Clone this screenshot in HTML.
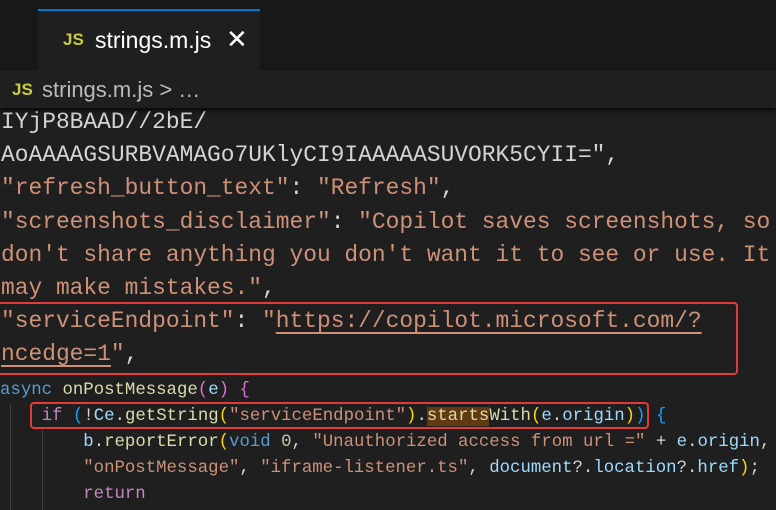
<!DOCTYPE html>
<html><head><meta charset="utf-8"><style>
body{margin:0;width:776px;height:510px;background:#1f1f1f;overflow:hidden;position:relative;font-family:"Liberation Mono",monospace}
.top{position:absolute;left:0;top:0;width:776px;height:70px;background:#181818}
.tab{position:absolute;left:38px;top:9px;width:222px;height:61px;background:#1f1f1f;border-top:2px solid #0078d4;box-sizing:border-box}
.tab .js{position:absolute;left:25px;top:19px;color:#cbcb41;font:bold 17px "Liberation Sans",sans-serif}
.tab .n{position:absolute;left:57px;top:16px;color:#fff;font:23px "Liberation Sans",sans-serif}
.tab .x{position:absolute;left:188px;top:13px;color:#fff;font:26px "Liberation Sans",sans-serif}
.bc{position:absolute;left:0;top:70px;width:776px;height:38px;background:#1f1f1f;box-shadow:0 3px 4px #000a;z-index:2}
.bc .js{position:absolute;left:12px;top:10px;color:#cbcb41;font:bold 17px "Liberation Sans",sans-serif}
.bc .n{position:absolute;left:42px;top:7px;color:#bbb;font:22px "Liberation Sans",sans-serif}
.big{position:absolute;left:1px;top:106px;font-size:22.9px;line-height:33.2px;color:#ce9178;white-space:pre}
.sm{position:absolute;left:0;top:378px;font-size:17.35px;line-height:26px;color:#d4d4d4;white-space:pre}
.w{color:#d4d4d4}.u{text-decoration:underline;text-underline-offset:5px}
.b{color:#569cd6}.y{color:#dcdcaa}.l{color:#9cdcfe}.p{color:#da70d6}.k{color:#c586c0}.br{color:#179fff}.g{color:#ffd700}.s{color:#ce9178}.nm{color:#b5cea8}
.box1{position:absolute;left:-4px;top:302px;width:742px;height:73px;border:2px solid #e53a3a;border-radius:4px;box-sizing:border-box}
.box2{position:absolute;left:30px;top:402px;width:619px;height:27px;border:2px solid #e53a3a;border-radius:4px;box-sizing:border-box}
.g1{position:absolute;left:10px;top:404px;width:1px;height:106px;background:#404040}
.g2{position:absolute;left:42px;top:430px;width:1px;height:80px;background:#404040}
.hl{background:#613a12}
</style></head><body>
<div class="top"><div class="tab"><span class="js">JS</span><span class="n">strings.m.js</span><span class="x">✕</span></div></div>
<div class="bc"><span class="js">JS</span><span class="n">strings.m.js &gt; …</span></div>
<div class="big"><span class="w">IYjP8BAAD//2bE/
AoAAAAGSURBVAMAGo7UKlyCI9IAAAAASUVORK5CYII="</span><span class="w">,</span>
"refresh_button_text"<span class="w">: </span>"Refresh"<span class="w">,</span>
"screenshots_disclaimer"<span class="w">: </span>"Copilot saves screenshots, so
don't share anything you don't want it to see or use. It
may make mistakes."<span class="w">,</span>
"serviceEndpoint"<span class="w">: </span>"<span class="u">https://copilot.microsoft.com/?
ncedge=1</span>"<span class="w">,</span></div>
<div class="g1"></div><div class="g2"></div>
<div class="sm"><span class="b">async</span> <span class="y">onPostMessage</span><span class="p">(</span><span class="l">e</span><span class="p">)</span> <span class="p">{</span>
    <span class="k">if</span> <span class="br">(</span>!<span class="l">Ce</span>.<span class="y">getString</span><span class="g">(</span><span class="s">"serviceEndpoint"</span><span class="g">)</span>.<span class="y"><span class="hl">starts</span>With</span><span class="g">(</span><span class="l">e</span>.<span class="l">origin</span><span class="g">)</span><span class="br">)</span> <span class="br">{</span>
        <span class="l">b</span>.<span class="y">reportError</span><span class="g">(</span><span class="b">void</span> <span class="nm">0</span>, <span class="s">"Unauthorized access from url ="</span> + <span class="l">e</span>.<span class="l">origin</span>,
        <span class="s">"onPostMessage"</span>, <span class="s">"iframe-listener.ts"</span>, <span class="l">document</span>?.<span class="l">location</span>?.<span class="l">href</span><span class="g">)</span>;
        <span class="k">return</span></div>
<div class="box1"></div><div class="box2"></div>
</body></html>
